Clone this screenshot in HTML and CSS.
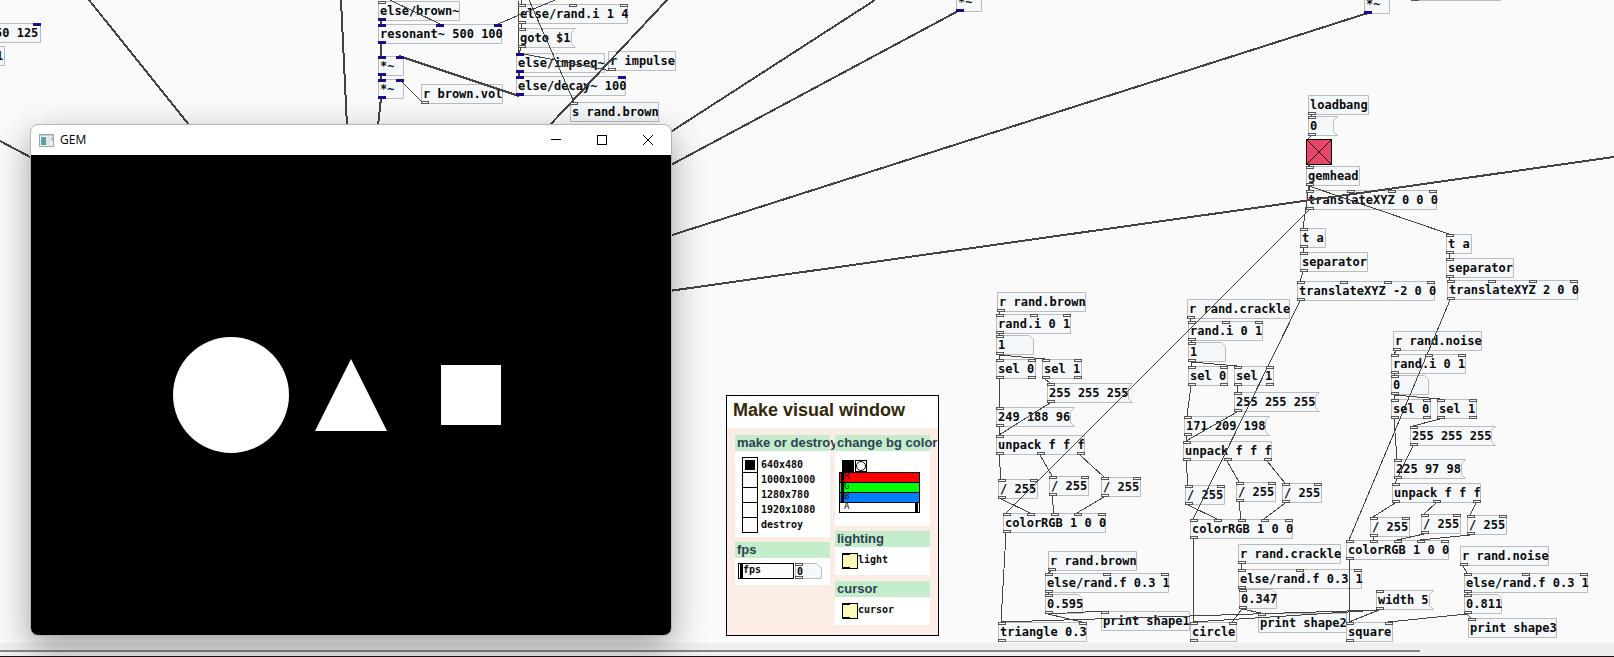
FILE: index.html
```html
<!DOCTYPE html>
<html lang="en">
<head>
<meta charset="utf-8">
<title>Patch canvas</title>
<link rel="stylesheet" href="styles.css">
</head>
<body>
<main class="canvas">
  <div class="nodes" id="nodes"></div>

  <section class="panel" aria-label="Make visual window">
    <h1 class="panel-title">Make visual window</h1>
    <div class="panel-body">
      <div class="column">
        <section class="card">
          <h2 class="card-title">make or destroy</h2>
          <div class="card-body radios">
            <label class="radio-row"><input class="radio" type="radio" name="size" checked>640x480</label>
            <label class="radio-row"><input class="radio" type="radio" name="size">1000x1000</label>
            <label class="radio-row"><input class="radio" type="radio" name="size">1280x780</label>
            <label class="radio-row"><input class="radio" type="radio" name="size">1920x1080</label>
            <label class="radio-row"><input class="radio" type="radio" name="size">destroy</label>
          </div>
        </section>
        <section class="card">
          <h2 class="card-title">fps</h2>
          <div class="card-body fps">
            <label class="slider fps-slider"><span class="slider-name">fps</span><input class="range" type="range" min="0" max="100" value="0"></label>
            <div class="mini-atom">
              <svg class="shape" width="27" height="16" aria-hidden="true"><path class="box-line" d="M.5 .5H22L26.5 5V15.5H.5Z"/><path class="port" d="M.5 .5h7v2h-7zM.5 13.5h7v2h-7z"/></svg>
              <input class="mini-input" type="text" value="0" aria-label="fps value">
            </div>
          </div>
        </section>
      </div>
      <div class="column">
        <section class="card color-card">
          <h2 class="card-title">change bg color</h2>
          <div class="card-body color">
            <div class="bangs">
              <button class="swatch" type="button" aria-label="Current colour"></button>
              <button class="bang" type="button" aria-label="Apply colour"><svg width="12" height="12" viewBox="0 0 12 12"><circle cx="6" cy="6" r="4.5"/></svg></button>
            </div>
            <label class="slider red"><span class="slider-name">R</span><input class="range" type="range" value="0"></label>
            <label class="slider green"><span class="slider-name">G</span><input class="range" type="range" value="0"></label>
            <label class="slider blue"><span class="slider-name">B</span><input class="range" type="range" value="0"></label>
            <label class="slider alpha"><span class="slider-name">A</span><input class="range" type="range" value="100"></label>
          </div>
        </section>
        <section class="card">
          <h2 class="card-title">lighting</h2>
          <div class="card-body switch"><label class="switch-row"><input class="toggle" type="checkbox">light</label></div>
        </section>
        <section class="card">
          <h2 class="card-title">cursor</h2>
          <div class="card-body switch"><label class="switch-row"><input class="toggle" type="checkbox">cursor</label></div>
        </section>
      </div>
    </div>
  </section>

  <svg class="wires" id="wires" aria-hidden="true"></svg>

  <section class="window" aria-label="GEM">
    <header class="titlebar">
      <svg class="app-icon" width="15" height="13" viewBox="0 0 15 13" aria-hidden="true">
        <defs><linearGradient id="screen" x1="0" y1="0" x2="1" y2="1"><stop offset="0" stop-color="#6fa3c4"/><stop offset="1" stop-color="#4f9c84"/></linearGradient></defs>
        <rect x=".5" y=".5" width="14" height="12" fill="#eef1f2" stroke="#9aa5ad"/>
        <rect x="1" y="1" width="13" height="1" fill="#c3ccd2"/>
        <rect x="2" y="3" width="5" height="8" fill="url(#screen)"/>
        <rect x="8" y="3" width="3" height="8" fill="#dfe3e0"/>
        <rect x="12" y="3" width="2" height="4" fill="#b9c6cf"/>
      </svg>
      <span class="window-name">GEM</span>
      <div class="window-buttons">
        <button class="win-btn" type="button" aria-label="Minimize"><svg width="10" height="10" viewBox="0 0 10 10"><path d="M0 4.5H10"/></svg></button>
        <button class="win-btn" type="button" aria-label="Maximize"><svg width="10" height="10" viewBox="0 0 10 10"><rect x=".5" y=".5" width="9" height="9"/></svg></button>
        <button class="win-btn" type="button" aria-label="Close"><svg width="10" height="10" viewBox="0 0 10 10"><path d="M0 0L10 10M10 0L0 10"/></svg></button>
      </div>
    </header>
    <svg class="stage" viewBox="0 0 640 480" role="img" aria-label="Circle, triangle and square">
      <circle cx="200" cy="240" r="58"/>
      <path d="M320 204L356 276H284Z"/>
      <rect x="410" y="210" width="60" height="60"/>
    </svg>
  </section>
</main>
<footer class="scroll-strip"><div class="scroll-thumb"></div></footer>
<script src="script.js"></script>
</body>
</html>
```
FILE: styles.css
```css
* { box-sizing: border-box; }

body {
  margin: 0;
  min-height: 100vh;
  display: flex;
  flex-direction: column;
  overflow: hidden;
  background: #fafafa;
  color: #0a0a0a;
  font-family: "DejaVu Sans Mono", monospace;
}

.canvas {
  position: relative;
  flex: 1;
}

/* Patch objects */
.nodes, .wires { position: absolute; inset: 0; }
.wires { width: 100%; height: 100%; pointer-events: none; }

.node {
  position: absolute;
  height: 20px;
  padding: 0 0 0 2px;
  border: 0;
  background: none;
  color: #0a0a0a;
  font: bold 12px/21px "DejaVu Sans Mono", monospace;
  text-align: left;
  white-space: pre;
}
.node .shape { position: absolute; inset: 0; z-index: -1; }
.nodes { z-index: 0; }
.node input {
  width: 100%;
  height: 21px;
  padding: 0;
  border: 0;
  background: none;
  color: inherit;
  font: inherit;
  display: block;
}
.box-line { fill: #f5f8fb; stroke: #b9bbbd; }
.port { fill: #fafafa; stroke: #555; shape-rendering: crispEdges; }
.port-signal { fill: #1c0a8c; shape-rendering: crispEdges; }
.wire { stroke: #444; fill: none; shape-rendering: crispEdges; }
.wire-signal { stroke: #424242; stroke-width: 2; fill: none; shape-rendering: crispEdges; }

.gem-toggle {
  position: absolute;
  appearance: none;
  width: 26px;
  height: 26px;
  margin: 0;
  border: 1px solid #000;
  background:
    linear-gradient(45deg, transparent 49%, #200 49%, #200 51%, transparent 51%),
    linear-gradient(-45deg, transparent 49%, #200 49%, #200 51%, transparent 51%),
    #e8456b;
}

/* Control panel */
.panel {
  position: absolute;
  left: 726px;
  top: 395px;
  width: 213px;
  height: 241px;
  border: 1px solid #000;
  background: #fbece6;
  font: bold 10px/15px "DejaVu Sans Mono", monospace;
}
.panel-title {
  margin: 0;
  padding: 0 6px;
  background: #fff;
  color: #322806;
  font: bold 18px/28px "Liberation Sans", Arial, sans-serif;
  height: 32px;
  white-space: nowrap;
}
.panel-body { display: flex; gap: 5px; padding: 7px 8px; }
.column { width: 95px; display: flex; flex-direction: column; gap: 5px; }
.card { background: #fff; }
.card-title {
  margin: 0;
  padding-left: 2px;
  background: #c4eecb;
  color: #2f4055;
  font: bold 13px/16px "Liberation Sans", Arial, sans-serif;
  white-space: nowrap;
}
.radios { padding: 6px 7px 5px; }
.radio-row { display: flex; height: 15px; gap: 3px; line-height: 16px; }
.radio {
  appearance: none;
  flex: none;
  width: 16px;
  height: 16px;
  margin: 0;
  border: 1px solid #000;
  background: #fcfcfc;
}
.radio:checked { background: #000; box-shadow: inset 0 0 0 2px #fcfcfc; }
.fps { display: flex; gap: 1px; padding: 5px 3px 6px; }

.slider { position: relative; display: block; height: 11px; margin-bottom: -1px; border: 1px solid #000; }
.slider-name { position: absolute; left: 4px; top: 0; line-height: 9px; z-index: 1; pointer-events: none; }
.range { appearance: none; display: block; width: 100%; height: 100%; margin: 0; background: none; }
.range::-webkit-slider-thumb { appearance: none; width: 3px; height: 9px; background: #000; }
.fps-slider { width: 56px; height: 16px; margin: 0; padding: 0 1px; background: #fcfcfc; }
.fps-slider .range::-webkit-slider-thumb { height: 14px; }
.fps-slider .slider-name { line-height: 12px; }
.red { background: #f00; }
.green { background: #0f0; }
.blue { background: #0080ff; }
.alpha { background: #fff; }
.color .slider { width: 81px; padding: 0 1px; font-weight: normal; font-size: 9px; }
.color .slider-name { line-height: 7px; }

.mini-atom { position: relative; width: 27px; height: 16px; }
.mini-atom .shape { position: absolute; inset: 0; }
.mini-input {
  position: relative;
  display: block;
  width: 24px;
  height: 17px;
  padding: 0 0 0 2px;
  border: 0;
  background: none;
  font: inherit;
}

.color { padding: 9px 4px 14px; }
.bangs { display: flex; gap: 1px; padding-left: 3px; }
.swatch, .bang { width: 12px; height: 12px; padding: 0; border: 0; background: #000; }
.bang { outline: 1px solid #000; outline-offset: -1px; background: #fff; }
.bang svg { display: block; fill: #fff; stroke: #000; }
.switch { padding: 6px 7px; }
.column .card + .card + .card { margin-top: 1px; }
.switch-row { display: flex; line-height: 13px; }
.toggle {
  appearance: none;
  width: 16px;
  height: 16px;
  margin: 0;
  border: 1px solid #000;
  background:
    linear-gradient(#000, #000) left top / 7px 1px no-repeat,
    linear-gradient(#000, #000) left bottom / 7px 1px no-repeat,
    #fffcb8;
}

/* Rendering window */
.window {
  position: absolute;
  left: 30px;
  top: 124px;
  width: 642px;
  border: 1px solid #b5b5b5;
  border-radius: 8px;
  overflow: hidden;
  background: #fff;
  box-shadow: 0 12px 34px rgba(0, 0, 0, .36);
}
.titlebar { display: flex; height: 30px; align-items: center; padding-left: 8px; }
.window-name { margin-left: 6px; font: 12px/16px "Open Sans", "Noto Sans", sans-serif; color: #000; }
.window-buttons { display: flex; margin-left: auto; }
.win-btn { width: 46px; height: 28px; padding: 0; border: 0; background: none; }
.win-btn svg { fill: none; stroke: #000; display: block; margin: 0 auto; }
.stage { display: block; width: 100%; background: #000; fill: #fff; }

/* Bottom scrollbar */
.scroll-strip { height: 14px; padding-top: 7px; background: #efefef; border-bottom: 1px solid #1c0f14; }
.scroll-thumb { width: 88%; height: 2px; background: #858585; }
```
FILE: script.js
```
// id: [kind, x, y, width, text, inlets, outlets]
// "s" after a port count marks audio-rate ports.
const nodes = {
  cutA: ["obj", -7, 23, 48, "50 125", "0", "0"],
  cutB: ["obj", -6, 46, 11, "1", "0", "0"],
  cutC: ["obj", 956, -8, 26, "*~", "0", "1s"],
  cutD: ["obj", 1364, -6, 26, "*~", "0", "1s"],
  cutE: ["obj", 1411, -19, 90, "", "0", "1"],

  brown: ["obj", 378, 1, 82, "else/brown~", "1", "1s"],
  reson: ["obj", 378, 24, 124, "resonant~ 500 100", "3s", "1s"],
  mulA: ["obj", 378, 56, 26, "*~", "2s", "1s"],
  mulB: ["obj", 378, 79, 26, "*~", "2s", "1s"],
  vol: ["obj", 421, 84, 82, "r brown.vol", "0", "1"],
  randi: ["obj", 518, 4, 110, "else/rand.i 1 4", "3", "1"],
  goto: ["msg", 518, 28, 58, "goto $1", "1", "1"],
  impseq: ["obj", 516, 53, 89, "else/impseq~", "1s", "1s"],
  impulse: ["obj", 608, 51, 68, "r impulse", "0", "1"],
  decay: ["obj", 516, 76, 110, "else/decay~ 100", "2s", "1s"],
  sbrown: ["obj", 570, 102, 89, "s rand.brown", "1", "0"],

  load: ["obj", 1308, 95, 61, "loadbang", "0", "1"],
  zero: ["msg", 1308, 116, 30, "0", "1", "1"],
  head: ["obj", 1306, 166, 54, "gemhead", "1", "1"],
  tr0: ["obj", 1306, 190, 131, "translateXYZ 0 0 0", "4", "1"],
  taL: ["obj", 1300, 228, 26, "t a", "1", "1"],
  sepL: ["obj", 1300, 252, 68, "separator", "1", "1"],
  trL: ["obj", 1297, 281, 138, "translateXYZ -2 0 0", "4", "1"],
  taR: ["obj", 1446, 234, 26, "t a", "1", "1"],
  sepR: ["obj", 1446, 258, 68, "separator", "1", "1"],
  trR: ["obj", 1447, 280, 131, "translateXYZ 2 0 0", "4", "1"],

  rA: ["obj", 997, 292, 89, "r rand.brown", "0", "1"],
  riA: ["obj", 996, 314, 75, "rand.i 0 1", "3", "1"],
  atA: ["atom", 996, 335, 38, "1", "1", "1"],
  s0A: ["obj", 996, 359, 40, "sel 0", "2", "2"],
  s1A: ["obj", 1042, 359, 40, "sel 1", "2", "2"],
  whA: ["msg", 1047, 383, 86, "255 255 255", "1", "1"],
  coA: ["msg", 996, 407, 79, "249 188 96", "1", "1"],
  unA: ["obj", 996, 435, 89, "unpack f f f", "1", "3"],
  d1A: ["obj", 998, 479, 40, "/ 255", "2", "1"],
  d2A: ["obj", 1049, 476, 40, "/ 255", "2", "1"],
  d3A: ["obj", 1101, 477, 40, "/ 255", "2", "1"],
  rgbA: ["obj", 1003, 513, 103, "colorRGB 1 0 0", "5", "1"],
  r2A: ["obj", 1048, 551, 89, "r rand.brown", "0", "1"],
  rfA: ["obj", 1045, 573, 124, "else/rand.f 0.3 1", "3", "1"],
  vaA: ["atom", 1045, 594, 38, "0.595", "1", "1"],
  prA: ["obj", 1101, 611, 89, "print shape1", "1", "0"],
  tri: ["obj", 998, 622, 89, "triangle 0.3", "2", "1"],

  rB: ["obj", 1187, 299, 103, "r rand.crackle", "0", "1"],
  riB: ["obj", 1188, 321, 75, "rand.i 0 1", "3", "1"],
  atB: ["atom", 1188, 342, 38, "1", "1", "1"],
  s0B: ["obj", 1188, 366, 40, "sel 0", "2", "2"],
  s1B: ["obj", 1234, 366, 40, "sel 1", "2", "2"],
  whB: ["msg", 1234, 392, 86, "255 255 255", "1", "1"],
  coB: ["msg", 1184, 416, 86, "171 209 198", "1", "1"],
  unB: ["obj", 1183, 441, 89, "unpack f f f", "1", "3"],
  d1B: ["obj", 1185, 485, 40, "/ 255", "2", "1"],
  d2B: ["obj", 1236, 482, 40, "/ 255", "2", "1"],
  d3B: ["obj", 1282, 483, 40, "/ 255", "2", "1"],
  rgbB: ["obj", 1190, 519, 103, "colorRGB 1 0 0", "5", "1"],
  r2B: ["obj", 1238, 544, 103, "r rand.crackle", "0", "1"],
  rfB: ["obj", 1238, 569, 124, "else/rand.f 0.3 1", "3", "1"],
  vaB: ["atom", 1239, 589, 38, "0.347", "1", "1"],
  prB: ["obj", 1258, 613, 89, "print shape2", "1", "0"],
  cir: ["obj", 1190, 622, 47, "circle", "2", "1"],

  rC: ["obj", 1393, 331, 89, "r rand.noise", "0", "1"],
  riC: ["obj", 1391, 354, 75, "rand.i 0 1", "3", "1"],
  atC: ["atom", 1391, 375, 38, "0", "1", "1"],
  s0C: ["obj", 1391, 399, 40, "sel 0", "2", "2"],
  s1C: ["obj", 1437, 399, 40, "sel 1", "2", "2"],
  whC: ["msg", 1410, 426, 86, "255 255 255", "1", "1"],
  coC: ["msg", 1394, 459, 72, "225 97 98", "1", "1"],
  unC: ["obj", 1392, 483, 89, "unpack f f f", "1", "3"],
  d1C: ["obj", 1370, 517, 40, "/ 255", "2", "1"],
  d2C: ["obj", 1421, 514, 40, "/ 255", "2", "1"],
  d3C: ["obj", 1467, 515, 40, "/ 255", "2", "1"],
  rgbC: ["obj", 1346, 540, 103, "colorRGB 1 0 0", "5", "1"],
  r2C: ["obj", 1460, 546, 89, "r rand.noise", "0", "1"],
  rfC: ["obj", 1464, 573, 124, "else/rand.f 0.3 1", "3", "1"],
  vaC: ["atom", 1464, 594, 38, "0.811", "1", "1"],
  prC: ["obj", 1468, 618, 89, "print shape3", "1", "0"],
  wid: ["msg", 1376, 590, 58, "width 5", "1", "1"],
  squ: ["obj", 1346, 622, 47, "square", "2", "1"]
};

// "source.outlet target.inlet"; a trailing "s" draws an audio cord.
const cords = `
brown.0 reson.0 s|reson.0 mulA.0 s|mulA.0 mulB.0 s|decay.0 mulA.1 s|vol.0 mulB.1|randi.0 goto.0|goto.0 impseq.0
impulse.0 impseq.0|impseq.0 decay.0 s|load.0 zero.0|head.0 tr0.0|head.0 taL.0|head.0 taR.0|taL.0 sepL.0|sepL.0 trL.0
taR.0 sepR.0|sepR.0 trR.0|tr0.0 rgbA.0|trL.0 rgbB.0|trR.0 rgbC.0
rgbA.0 tri.0|rgbB.0 cir.0|rgbC.0 squ.0|vaA.0 tri.1|vaB.0 cir.1|vaC.0 squ.1|wid.0 tri.0|wid.0 cir.0|wid.0 squ.0`;

const column = `
r_.0 ri_.0|ri_.0 at_.0|at_.0 s0_.0|at_.0 s1_.0|s0_.0 co_.0|s1_.0 wh_.0|wh_.0 un_.0|co_.0 un_.0
un_.0 d1_.0|un_.1 d2_.0|un_.2 d3_.0|d1_.0 rgb_.1|d2_.0 rgb_.2|d3_.0 rgb_.3|r2_.0 rf_.0|rf_.0 va_.0|va_.0 pr_.0`;

// Cords with an end beyond the visible canvas: [x1, y1, x2, y2, audio]
const loose = [
  [89, 0, 190, 126, 1], [341, 0, 347, 126, 1], [0, 141, 32, 158, 1], [381, 98, 378, 126, 1],
  [667, 0, 549, 126, 1], [875, 0, 669, 133, 1], [960, 10, 669, 166, 1], [1368, 13, 669, 236, 1],
  [1614, 157, 669, 291, 1], [390, 0, 440, 24], [555, 0, 498, 24], [529, 0, 574, 102],
  [518, 0, 519, 53], [521, 0, 522, 4], [1312, 135, 1308, 139], [1308, 164, 1310, 167]
];

const NS = "http://www.w3.org/2000/svg";
const H = 20;
const layer = document.getElementById("nodes");
const wires = document.getElementById("wires");

function svg(tag, attrs, parent) {
  const el = document.createElementNS(NS, tag);
  for (const k in attrs) el.setAttribute(k, attrs[k]);
  parent.appendChild(el);
  return el;
}

function portX(x, w, count, i) {
  return count > 1 ? Math.round(x + i * (w - 8) / (count - 1)) : x;
}

function outline(kind, w) {
  if (kind === "msg") return `M.5 .5H${w - .5}L${w - 4.5} 4.5V15.5L${w - .5} 19.5H.5Z`;
  if (kind === "atom") return `M.5 .5H${w - 4.5}L${w - .5} 4.5V19.5H.5Z`;
  return `M.5 .5H${w - .5}V19.5H.5Z`;
}

function drawPorts(x, y, w, spec) {
  const count = parseInt(spec, 10);
  const audio = spec.endsWith("s");
  for (let i = 0; i < count; i++) {
    const px = portX(x, w, count, i);
    if (audio) svg("rect", { class: "port-signal", x: px, y, width: 8, height: 3 }, wires);
    else svg("rect", { class: "port", x: px + .5, y: y + .5, width: 7, height: 2 }, wires);
  }
}

function drawCord(x1, y1, x2, y2, audio) {
  svg("line", { class: audio ? "wire-signal" : "wire", x1, y1, x2, y2 }, wires);
}

for (const [kind, x, y, w, text] of Object.values(nodes)) {
  const el = document.createElement(kind === "msg" ? "button" : "div");
  el.className = "node";
  el.style.cssText = `left:${x}px;top:${y}px;width:${w}px`;
  const shape = svg("svg", { class: "shape", width: w, height: H }, el);
  svg("path", { class: "box-line", d: outline(kind, w) }, shape);
  if (kind === "atom") {
    const input = document.createElement("input");
    input.value = text;
    input.setAttribute("aria-label", "Number");
    el.appendChild(input);
  } else {
    el.appendChild(document.createTextNode(text));
  }
  layer.appendChild(el);
}

const toggle = document.createElement("input");
toggle.type = "checkbox";
toggle.checked = true;
toggle.className = "gem-toggle";
toggle.setAttribute("aria-label", "Render");
toggle.style.cssText = "left:1306px;top:139px";
layer.appendChild(toggle);

const all = [cords, ...["A", "B", "C"].map(c => column.replace(/_/g, c))].join("|");
for (const cord of all.split(/[|\n]/).filter(Boolean)) {
  const [from, to, audio] = cord.split(" ");
  const [a, out] = from.split(".");
  const [b, inl] = to.split(".");
  const s = nodes[a], t = nodes[b];
  drawCord(portX(s[1], s[3], parseInt(s[6], 10), +out) + 3, s[2] + H,
           portX(t[1], t[3], parseInt(t[5], 10), +inl) + 3, t[2], audio);
}
loose.forEach(c => drawCord(...c));

for (const [, x, y, w, , ins, outs] of Object.values(nodes)) {
  drawPorts(x, y, w, ins);
  drawPorts(x, y + H - 3, w, outs);
}
svg("rect", { class: "port-signal", x: 33, y: 23, width: 8, height: 3 }, wires);
```
